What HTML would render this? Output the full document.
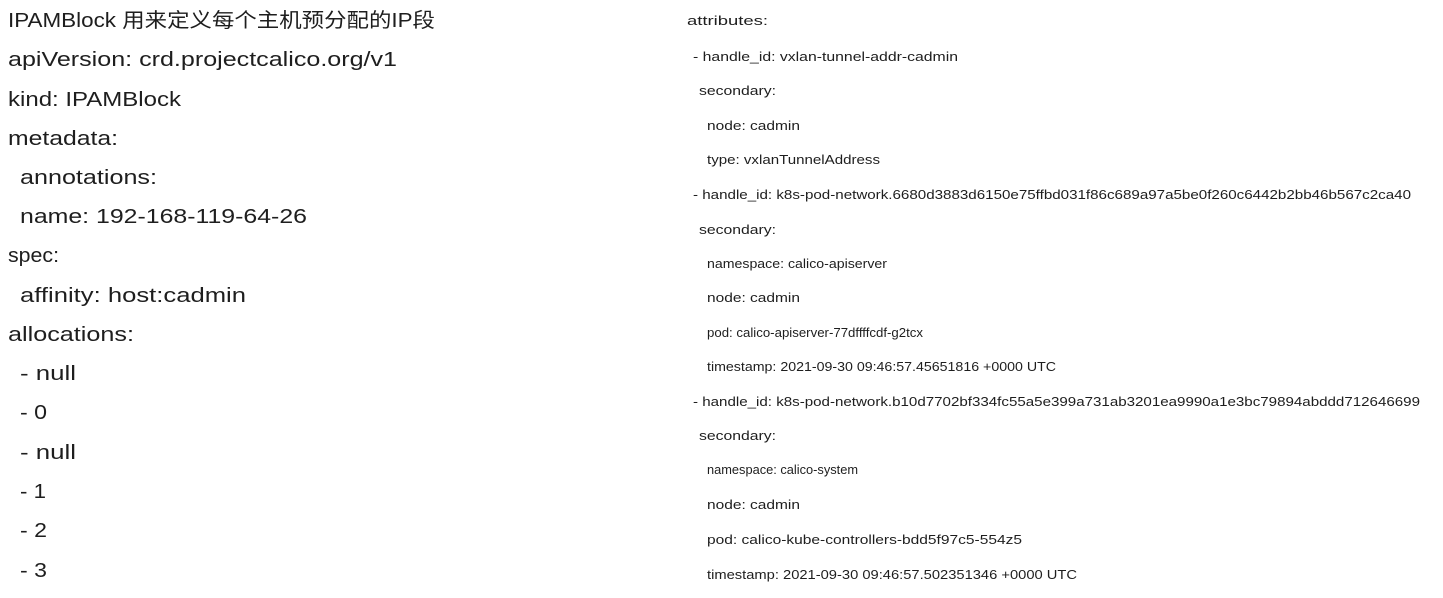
<!DOCTYPE html>
<html><head><meta charset="utf-8"><style>
html,body{margin:0;padding:0;background:#fff;}
svg{display:block;}
text{fill:#1e1e1e;font-family:"Liberation Sans","Noto Sans CJK SC",sans-serif;}
.l{font-size:20px;}
.r{font-size:13px;}
</style></head><body>
<svg width="1443" height="598" xmlns="http://www.w3.org/2000/svg">
<g class="l">
<text x="8" y="27" textLength="427" lengthAdjust="spacingAndGlyphs">IPAMBlock 用来定义每个主机预分配的IP段</text>
<text x="8" y="66" textLength="389" lengthAdjust="spacingAndGlyphs">apiVersion: crd.projectcalico.org/v1</text>
<text x="8" y="106" textLength="173" lengthAdjust="spacingAndGlyphs">kind: IPAMBlock</text>
<text x="8" y="145" textLength="110" lengthAdjust="spacingAndGlyphs">metadata:</text>
<text x="20" y="184" textLength="137" lengthAdjust="spacingAndGlyphs">annotations:</text>
<text x="20" y="223" textLength="287" lengthAdjust="spacingAndGlyphs">name: 192-168-119-64-26</text>
<text x="8" y="262" textLength="51" lengthAdjust="spacingAndGlyphs">spec:</text>
<text x="20" y="302" textLength="226" lengthAdjust="spacingAndGlyphs">affinity: host:cadmin</text>
<text x="8" y="341" textLength="126" lengthAdjust="spacingAndGlyphs">allocations:</text>
<text x="20" y="380" textLength="56" lengthAdjust="spacingAndGlyphs">- null</text>
<text x="20" y="419" textLength="27" lengthAdjust="spacingAndGlyphs">- 0</text>
<text x="20" y="459" textLength="56" lengthAdjust="spacingAndGlyphs">- null</text>
<text x="20" y="498" textLength="26" lengthAdjust="spacingAndGlyphs">- 1</text>
<text x="20" y="537" textLength="27" lengthAdjust="spacingAndGlyphs">- 2</text>
<text x="20" y="577" textLength="27" lengthAdjust="spacingAndGlyphs">- 3</text>
</g>
<g class="r">
<text x="687" y="25" textLength="81" lengthAdjust="spacingAndGlyphs">attributes:</text>
<text x="693" y="61" textLength="265" lengthAdjust="spacingAndGlyphs">- handle_id: vxlan-tunnel-addr-cadmin</text>
<text x="699" y="95" textLength="77" lengthAdjust="spacingAndGlyphs">secondary:</text>
<text x="707" y="130" textLength="93" lengthAdjust="spacingAndGlyphs">node: cadmin</text>
<text x="707" y="164" textLength="173" lengthAdjust="spacingAndGlyphs">type: vxlanTunnelAddress</text>
<text x="693" y="199" textLength="718" lengthAdjust="spacingAndGlyphs">- handle_id: k8s-pod-network.6680d3883d6150e75ffbd031f86c689a97a5be0f260c6442b2bb46b567c2ca40</text>
<text x="699" y="234" textLength="77" lengthAdjust="spacingAndGlyphs">secondary:</text>
<text x="707" y="268" textLength="180" lengthAdjust="spacingAndGlyphs">namespace: calico-apiserver</text>
<text x="707" y="302" textLength="93" lengthAdjust="spacingAndGlyphs">node: cadmin</text>
<text x="707" y="337" textLength="216" lengthAdjust="spacingAndGlyphs">pod: calico-apiserver-77dffffcdf-g2tcx</text>
<text x="707" y="371" textLength="349" lengthAdjust="spacingAndGlyphs">timestamp: 2021-09-30 09:46:57.45651816 +0000 UTC</text>
<text x="693" y="406" textLength="727" lengthAdjust="spacingAndGlyphs">- handle_id: k8s-pod-network.b10d7702bf334fc55a5e399a731ab3201ea9990a1e3bc79894abddd712646699</text>
<text x="699" y="440" textLength="77" lengthAdjust="spacingAndGlyphs">secondary:</text>
<text x="707" y="474" textLength="151" lengthAdjust="spacingAndGlyphs">namespace: calico-system</text>
<text x="707" y="509" textLength="93" lengthAdjust="spacingAndGlyphs">node: cadmin</text>
<text x="707" y="544" textLength="315" lengthAdjust="spacingAndGlyphs">pod: calico-kube-controllers-bdd5f97c5-554z5</text>
<text x="707" y="579" textLength="370" lengthAdjust="spacingAndGlyphs">timestamp: 2021-09-30 09:46:57.502351346 +0000 UTC</text>
</g>
</svg>
</body></html>
